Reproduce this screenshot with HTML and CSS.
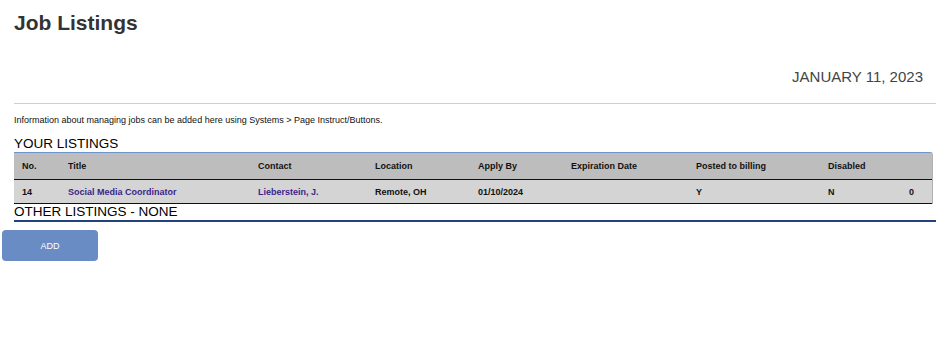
FILE: index.html
```html
<!DOCTYPE html>
<html lang="en">
<head>
  <meta charset="UTF-8">
  <meta name="viewport" content="width=device-width, initial-scale=1.0">
  <title>Job Listings</title>
  <link rel="stylesheet" href="styles.css">
</head>
<body>
  <div class="page">
    <h1>Job Listings</h1>
    <div class="date">JANUARY 11, 2023</div>
    <hr>
    <p class="info">Information about managing jobs can be added here using Systems &gt; Page Instruct/Buttons.</p>

    <h3 class="section">YOUR LISTINGS</h3>
    <table class="listings">
      <colgroup>
        <col style="width:46px">
        <col style="width:190px">
        <col style="width:117px">
        <col style="width:103px">
        <col style="width:93px">
        <col style="width:125px">
        <col style="width:132px">
        <col style="width:81px">
        <col style="width:31px">
      </colgroup>
      <thead>
        <tr>
          <th>No.</th>
          <th>Title</th>
          <th>Contact</th>
          <th>Location</th>
          <th>Apply By</th>
          <th>Expiration Date</th>
          <th>Posted to billing</th>
          <th>Disabled</th>
          <th></th>
        </tr>
      </thead>
      <tbody>
        <tr>
          <td>14</td>
          <td><a href="#">Social Media Coordinator</a></td>
          <td><a href="#">Lieberstein, J.</a></td>
          <td>Remote, OH</td>
          <td>01/10/2024</td>
          <td></td>
          <td>Y</td>
          <td>N</td>
          <td>0</td>
        </tr>
      </tbody>
    </table>

    <h3 class="section other">OTHER LISTINGS - NONE</h3>
  </div>
  <div class="actions">
    <button type="button">ADD</button>
  </div>
</body>
</html>
```

FILE: styles.css
```css
body {
  font-family: "Liberation Sans", Arial, sans-serif;
  background: #fff;
  color: #000;
  margin: 0;
}
.page {
  padding-left: 14px;
}
h1 {
  margin: 11px 0 0;
  font-size: 21px;
  line-height: 24px;
  font-weight: bold;
  color: #333;
}
.date {
  margin-top: 33px;
  padding-right: 13px;
  text-align: right;
  font-size: 15px;
  line-height: 18px;
  color: #444;
}
hr {
  margin: 17px 0 0;
  border: none;
  border-top: 1px solid #cfcfcf;
  height: 0;
}
.info {
  margin: 10px 0 0;
  font-size: 9px;
  line-height: 12px;
  color: #111;
}
.section {
  margin: 10px 0 0;
  font-size: 13.5px;
  line-height: 16px;
  font-weight: normal;
}
.section.other {
  margin: 0;
  border-bottom: 2px solid #23417d;
  line-height: 16px;
}
.listings {
  width: 918px;
  border-collapse: separate;
  border-spacing: 0;
  table-layout: fixed;
  font-size: 9px;
  font-weight: bold;
  color: #111;
  border-top: 1px solid #6f96cc;
  border-right: 1px solid #b0b0b0;
  border-top-right-radius: 3px;
}
.listings th,
.listings td {
  text-align: left;
  padding: 0 0 0 8px;
  white-space: nowrap;
}
.listings th {
  height: 26px;
  background: #bdbdbd;
  border-bottom: 1px solid #111;
}
.listings td {
  height: 23px;
  background: #d4d4d4;
  border-bottom: 1px solid #111;
}
.listings a {
  color: #3b2689;
  text-decoration: none;
}
.actions {
  padding: 8px 0 0 2px;
}
button {
  width: 96px;
  height: 31px;
  background: #6a8cc4;
  color: #fff;
  border: none;
  border-radius: 4px;
  font-family: "Liberation Sans", Arial, sans-serif;
  font-size: 9px;
  cursor: pointer;
}
button:hover {
  background: #5a7cb4;
}
```
